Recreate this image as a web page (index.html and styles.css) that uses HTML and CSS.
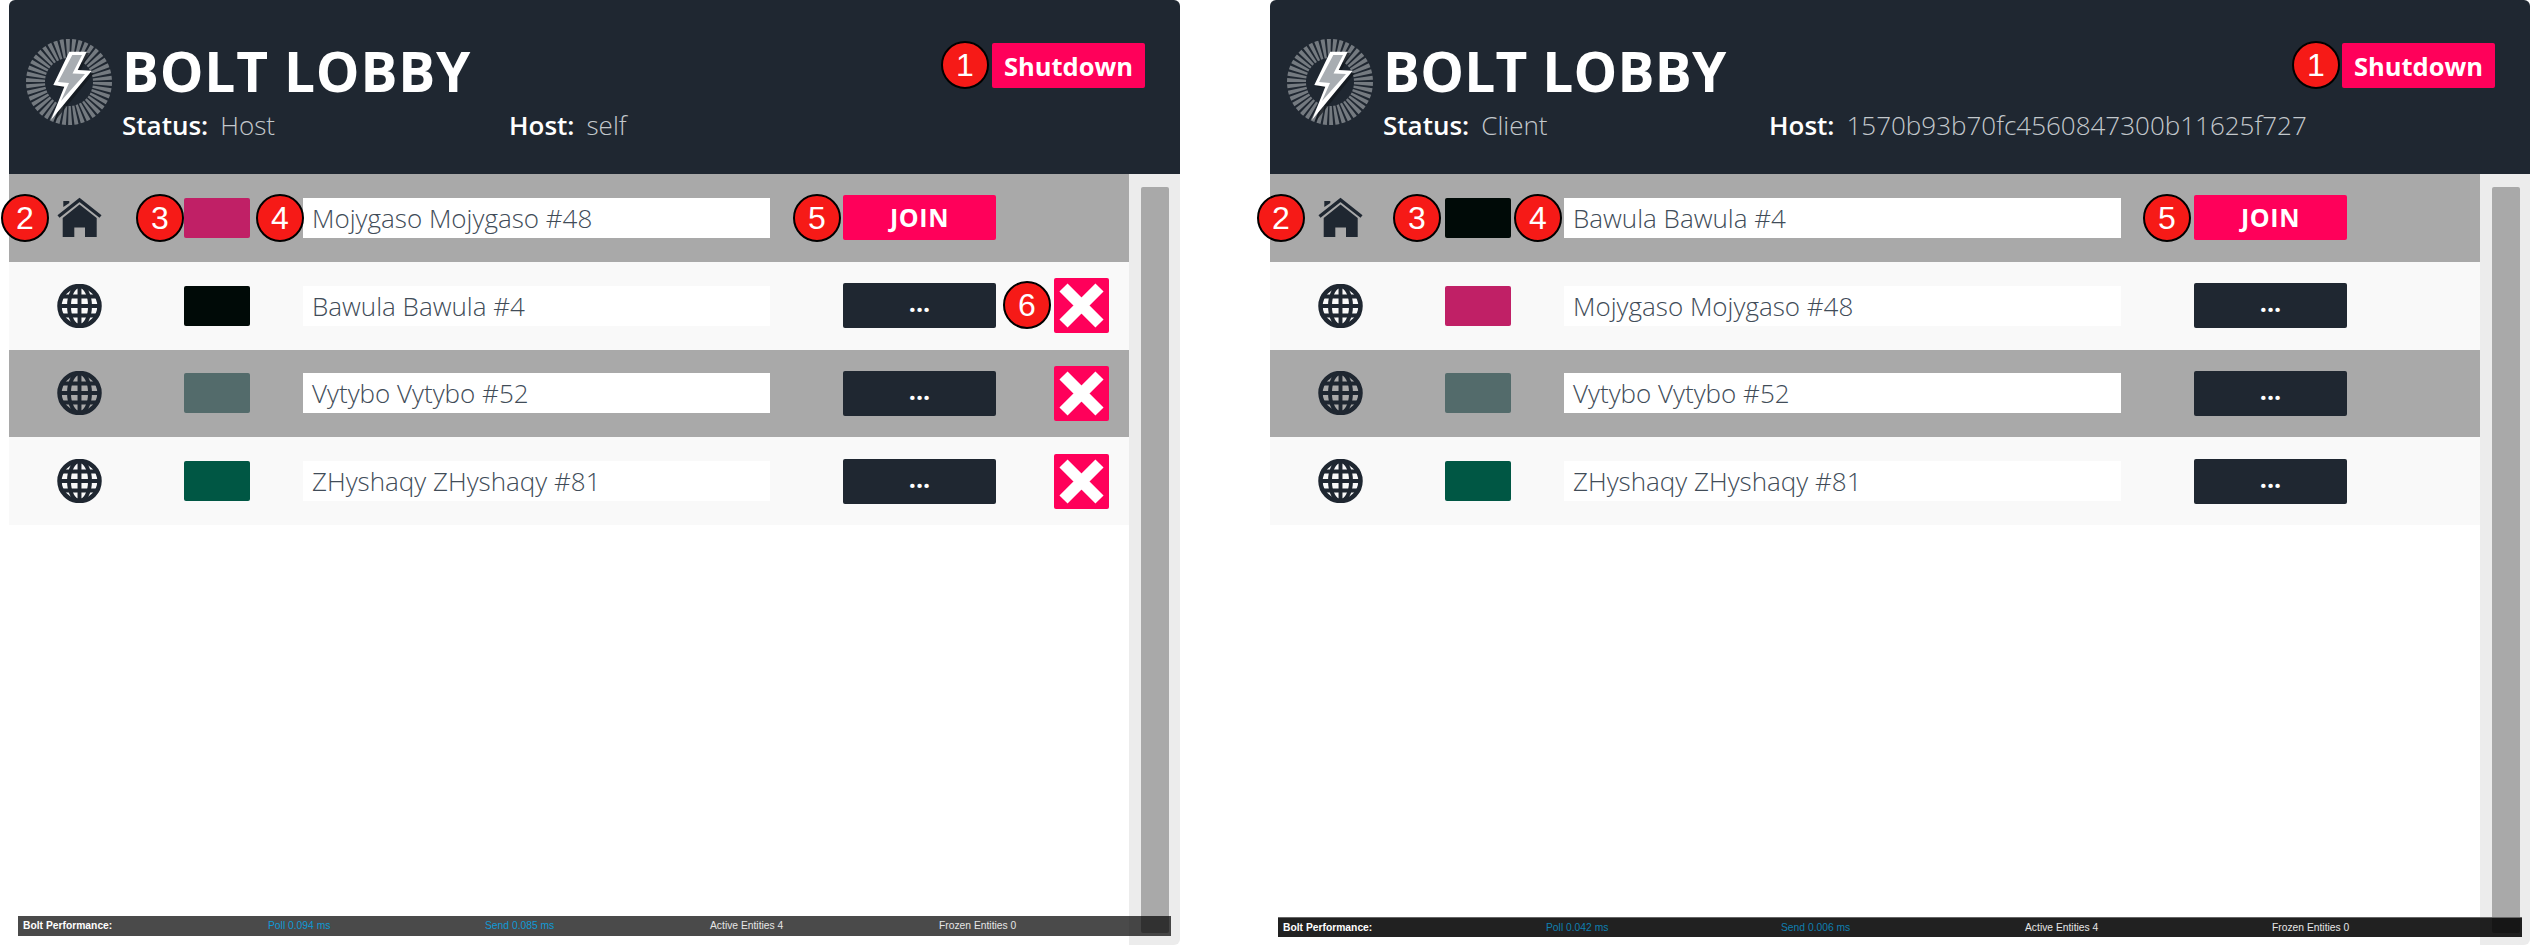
FILE: index.html
```html
<!DOCTYPE html>
<html lang="en">
<head>
<meta charset="utf-8">
<title>Bolt Lobby</title>
<link rel="stylesheet" href="styles.css">
</head>
<body>
<svg class="defs" width="0" height="0" aria-hidden="true">
  <defs>
    <symbol id="logo" viewBox="0 0 88 88">
      <circle cx="44" cy="44" r="33.5" fill="none" stroke="#747a80" stroke-width="19" pathLength="42" stroke-dasharray="0.64 0.36"/>
      <polygon points="47,15 64,15 55,34 69,35 29,84 42,50 31,49" fill="#14191f" opacity="0.75"/>
      <polygon points="44.3,13.7 61.7,13.7 52.7,32 66.7,32.7 26,82 39.3,48.7 28.3,47" fill="#fff"/>
      <polygon points="47.3,17 57,17 47.5,35.5 60,36 36,63 44,45 33,44" fill="#a8adb2"/>
    </symbol>
    <symbol id="home" viewBox="0 0 45 40">
      <path d="M1.5 18.5 22.5 2 43.5 18.5" fill="none" stroke="#1f2731" stroke-width="3.4"/>
      <path d="M6.3 9V3h6v2z" fill="#1f2731"/>
      <path d="M22.5 6.500 39.700 20V39H28V29.500H17.300V39H5.700V20z" fill="#1f2731"/>
    </symbol>
    <symbol id="globe" viewBox="0 0 45 44">
      <g fill="none" stroke="#1f2731" stroke-width="3.900">
        <circle cx="22.500" cy="22" r="20" stroke-width="4.500"/>
        <ellipse cx="22.500" cy="22" rx="10.500" ry="20"/>
        <path d="M22.500 1.500V42.500M2 22H43M5 12.500H40M5 31.500H40"/>
      </g>
    </symbol>
    <symbol id="cross" viewBox="0 0 55 55">
      <path d="M9.500 9.500 45.500 45.500M45.500 9.500 9.500 45.500" fill="none" stroke="#fff" stroke-width="11.500"/>
    </symbol>
  </defs>
</svg>

<main class="page">
  <section class="panel panel-host">
    <header class="head">
      <svg class="logo"><use href="#logo"/></svg>
      <div class="titles">
        <h1 class="title">BOLT LOBBY</h1>
        <div class="status">
          <div class="stat stat-role"><b class="stat-key">Status:</b><span class="stat-val">Host</span></div>
          <div class="stat"><b class="stat-key">Host:</b><span class="stat-val">self</span></div>
        </div>
      </div>
      <button class="shutdown">Shutdown</button>
    </header>
    <div class="body">
      <div class="rows">
        <div class="row row-gray">
          <div class="icon-cell"><svg class="ico"><use href="#home"/></svg></div>
          <div class="swatch sw-pink"></div>
          <div class="name">Mojygaso Mojygaso #48</div>
          <button class="action action-join">JOIN</button>
          <div class="kick-slot"></div>
        </div>
        <div class="row">
          <div class="icon-cell"><svg class="ico"><use href="#globe"/></svg></div>
          <div class="swatch sw-black"></div>
          <div class="name">Bawula Bawula #4</div>
          <button class="action">...</button>
          <div class="kick-slot"><svg class="kick"><use href="#cross"/></svg></div>
        </div>
        <div class="row row-gray">
          <div class="icon-cell"><svg class="ico"><use href="#globe"/></svg></div>
          <div class="swatch sw-slate"></div>
          <div class="name">Vytybo Vytybo #52</div>
          <button class="action">...</button>
          <div class="kick-slot"><svg class="kick"><use href="#cross"/></svg></div>
        </div>
        <div class="row">
          <div class="icon-cell"><svg class="ico"><use href="#globe"/></svg></div>
          <div class="swatch sw-green"></div>
          <div class="name">ZHyshaqy ZHyshaqy #81</div>
          <button class="action">...</button>
          <div class="kick-slot"><svg class="kick"><use href="#cross"/></svg></div>
        </div>
      </div>
      <div class="track"><div class="thumb"></div></div>
    </div>
    <div class="perf perf-host">
      <span class="perf-title">Bolt Performance:</span>
      <span class="perf-blue">Poll 0.094 ms</span>
      <span class="perf-blue">Send 0.085 ms</span>
      <span>Active Entities 4</span>
      <span>Frozen Entities 0</span>
    </div>
    <span class="badge h1">1</span>
    <span class="badge h2">2</span>
    <span class="badge h3">3</span>
    <span class="badge h4">4</span>
    <span class="badge h5">5</span>
    <span class="badge h6">6</span>
  </section>

  <section class="panel panel-client">
    <header class="head">
      <svg class="logo"><use href="#logo"/></svg>
      <div class="titles">
        <h1 class="title">BOLT LOBBY</h1>
        <div class="status">
          <div class="stat stat-role"><b class="stat-key">Status:</b><span class="stat-val">Client</span></div>
          <div class="stat"><b class="stat-key">Host:</b><span class="stat-val">1570b93b70fc4560847300b11625f727</span></div>
        </div>
      </div>
      <button class="shutdown">Shutdown</button>
    </header>
    <div class="body">
      <div class="rows">
        <div class="row row-gray">
          <div class="icon-cell"><svg class="ico"><use href="#home"/></svg></div>
          <div class="swatch sw-black"></div>
          <div class="name">Bawula Bawula #4</div>
          <button class="action action-join">JOIN</button>
          <div class="kick-slot"></div>
        </div>
        <div class="row">
          <div class="icon-cell"><svg class="ico"><use href="#globe"/></svg></div>
          <div class="swatch sw-pink"></div>
          <div class="name">Mojygaso Mojygaso #48</div>
          <button class="action">...</button>
          <div class="kick-slot"></div>
        </div>
        <div class="row row-gray">
          <div class="icon-cell"><svg class="ico"><use href="#globe"/></svg></div>
          <div class="swatch sw-slate"></div>
          <div class="name">Vytybo Vytybo #52</div>
          <button class="action">...</button>
          <div class="kick-slot"></div>
        </div>
        <div class="row">
          <div class="icon-cell"><svg class="ico"><use href="#globe"/></svg></div>
          <div class="swatch sw-green"></div>
          <div class="name">ZHyshaqy ZHyshaqy #81</div>
          <button class="action">...</button>
          <div class="kick-slot"></div>
        </div>
      </div>
      <div class="track"><div class="thumb"></div></div>
    </div>
    <div class="perf perf-client">
      <span class="perf-title">Bolt Performance:</span>
      <span class="perf-blue">Poll 0.042 ms</span>
      <span class="perf-blue">Send 0.006 ms</span>
      <span>Active Entities 4</span>
      <span>Frozen Entities 0</span>
    </div>
    <span class="badge c1">1</span>
    <span class="badge c2">2</span>
    <span class="badge c3">3</span>
    <span class="badge c4">4</span>
    <span class="badge c5">5</span>
  </section>
</main>
</body>
</html>
```

FILE: styles.css
```css
* { box-sizing: border-box; }
html, body { margin: 0; height: 945px; overflow: hidden; background: #fff; }
body { font-family: "Open Sans", "Liberation Sans", sans-serif; }
.defs { position: absolute; }

.page { display: flex; height: 945px; padding-left: 9px; column-gap: 90px; }
.panel { position: relative; display: flex; flex-direction: column; height: 945px; flex: none; }
.panel-host { width: 1171px; }
.panel-client { width: 1260px; }

.head {
  display: flex; align-items: flex-start; height: 174px; flex: none;
  background: #1f2731; border-radius: 6px 6px 0 0; color: #fff;
}
.logo { width: 88px; height: 88px; margin: 38px 0 0 16px; flex: none; }
.titles { margin: 41px 0 0 9px; flex: 1; }
.title { margin: 0; font-size: 55px; line-height: 60px; font-weight: 700; letter-spacing: 0.8px; color: #fff; }
.panel-client .title { letter-spacing: 0.25px; }
.status { display: flex; margin-top: 7px; font-size: 26px; line-height: 35px; }
.stat { display: flex; }
.stat-role { width: 387px; }
.panel-client .stat-role { width: 386px; }
.stat-key { font-weight: 600; margin-right: 12px; }
.stat-val { font-weight: 300; color: #c3c8cc; }
.shutdown {
  margin: 43px 35px 0 0; width: 153px; height: 45px; padding: 0; border: 0; border-radius: 2px;
  background: #ff005a; color: #fff; font: 700 25.500px "Open Sans", sans-serif; flex: none;
}

.body { display: flex; flex: 1; min-height: 0; }
.rows { flex: 1; min-width: 0; }
.row { display: flex; align-items: center; height: 87.75px; background: #f9f9f9; }
.row-gray { background: #a9a9a9; }
.icon-cell { width: 175px; flex: none; display: flex; padding-left: 48px; }
.ico { width: 45px; height: 44px; display: block; }
.swatch { width: 66px; height: 40px; border-radius: 2px; flex: none; }
.sw-pink { background: #c02066; }
.sw-black { background: #000a07; }
.sw-slate { background: #536b6b; }
.sw-green { background: #005744; }
.name {
  flex: 1; min-width: 0; height: 40px; margin: 0 73px 0 53px; padding-left: 9px;
  background: #fff; color: #414c58; font-size: 26px; font-weight: 300; line-height: 40px;
}
.action {
  width: 153px; height: 45px; flex: none; padding: 0 0 6px; border: 0; border-radius: 2px;
  background: #1f2731; color: #fff; font: 700 25px/1 "Open Sans", sans-serif;
}
.action-join { background: #ff005a; padding: 0; font-weight: 700; letter-spacing: 0.6px; }
.kick-slot { width: 55px; height: 55px; margin: 0 20px 0 58px; flex: none; }
.kick { width: 55px; height: 55px; display: block; background: #ff005a; border-radius: 2px; }

.track { width: 51px; flex: none; background: #ececec; padding: 13px 0 0 12px; border-radius: 0 0 6px 0; }
.panel-client .track { width: 50px; }
.thumb { width: 28px; height: 746px; background: #a9a9a9; border-radius: 2px; }

.perf {
  position: absolute; height: 20px; display: grid; align-items: center; padding-left: 5px;
  font: 10.300px/20px "Liberation Sans", Arial, sans-serif; color: #e6e6e6;
}
.perf-host { left: 9px; top: 916px; width: 1153px; background: rgba(0, 0, 0, 0.71); grid-template-columns: 245px 217px 225px 229px 1fr; }
.perf-client { left: 8px; top: 917px; width: 1244px; background: rgba(0, 0, 0, 0.87); border-top: 1px solid #666; grid-template-columns: 263px 235px 244px 247px 1fr; }
.perf-title { font-weight: 700; color: #fff; }
.perf-blue { color: #0f9ad6; }
.perf-client .perf-blue { color: #0f7fb0; }

.badge {
  position: absolute; width: 48px; height: 48px; border: 2px solid #000; border-radius: 50%;
  background: #f61a17; color: #fff; text-align: center;
  font: 32px/44px "Liberation Sans", Arial, sans-serif;
}
.h1, .c1 { top: 41px; }
.h2, .h3, .h4, .h5, .c2, .c3, .c4, .c5 { top: 194px; }
.h6 { top: 281px; }
.h1 { left: 932px; }
.h2 { left: -8px; }
.h3 { left: 127px; }
.h4 { left: 247px; }
.h5 { left: 784px; }
.h6 { left: 994px; }
.c1 { left: 1022px; }
.c2 { left: -13px; }
.c3 { left: 123px; }
.c4 { left: 244px; }
.c5 { left: 873px; }
```
